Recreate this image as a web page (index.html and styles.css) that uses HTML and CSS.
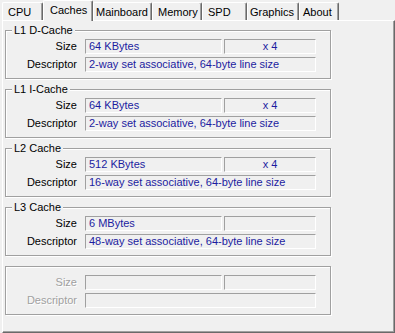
FILE: index.html
```html
<!DOCTYPE html>
<html lang="en">
<head>
    <meta charset="UTF-8">
    <title>CPU-Z Caches</title>
    <link rel="stylesheet" href="styles.css">
</head>
<body>
    <div class="tabs">
        <div class="tab tab-cpu">CPU</div>
        <div class="tab tab-caches active">Caches</div>
        <div class="tab tab-mainboard">Mainboard</div>
        <div class="tab tab-memory">Memory</div>
        <div class="tab tab-spd">SPD</div>
        <div class="tab tab-graphics">Graphics</div>
        <div class="tab tab-about">About</div>
    </div>

    <div class="panel">
        <!-- L1 data -->
        <div class="group">
            <span class="legend">L1 D-Cache</span>
            <div class="row">
                <span class="label">Size</span>
                <span class="field size">64 KBytes</span>
                <span class="field count">x 4</span>
            </div>
            <div class="row">
                <span class="label">Descriptor</span>
                <span class="field desc">2-way set associative, 64-byte line size</span>
            </div>
        </div>

        <!-- L1 instruction -->
        <div class="group">
            <span class="legend">L1 I-Cache</span>
            <div class="row">
                <span class="label">Size</span>
                <span class="field size">64 KBytes</span>
                <span class="field count">x 4</span>
            </div>
            <div class="row">
                <span class="label">Descriptor</span>
                <span class="field desc">2-way set associative, 64-byte line size</span>
            </div>
        </div>

        <!-- L2 -->
        <div class="group">
            <span class="legend">L2 Cache</span>
            <div class="row">
                <span class="label">Size</span>
                <span class="field size">512 KBytes</span>
                <span class="field count">x 4</span>
            </div>
            <div class="row">
                <span class="label">Descriptor</span>
                <span class="field desc">16-way set associative, 64-byte line size</span>
            </div>
        </div>

        <!-- L3 -->
        <div class="group">
            <span class="legend">L3 Cache</span>
            <div class="row">
                <span class="label">Size</span>
                <span class="field size">6 MBytes</span>
                <span class="field count"></span>
            </div>
            <div class="row">
                <span class="label">Descriptor</span>
                <span class="field desc">48-way set associative, 64-byte line size</span>
            </div>
        </div>

        <!-- empty slot -->
        <div class="group disabled">
            <div class="row">
                <span class="label">Size</span>
                <span class="field size"></span>
                <span class="field count"></span>
            </div>
            <div class="row">
                <span class="label">Descriptor</span>
                <span class="field desc"></span>
            </div>
        </div>
    </div>
</body>
</html>
```

FILE: styles.css
```css
/* window base */
body {
    margin: 0;
    padding: 0;
    background-color: #f0f0f0;
    color: #000;
    font-family: "Liberation Sans", Arial, sans-serif;
    font-size: 11px;
    line-height: 13px;
}

/* tab strip */
.tabs {
    display: flex;
    align-items: flex-end;
    height: 20px;
    padding-left: 2px;
}

.tab {
    box-sizing: border-box;
    height: 18px;
    padding: 3px 0 0 5px;
    border-top: 1px solid #fff;
    border-left: 1px solid #fff;
    border-right: 1px solid #696969;
    border-radius: 2px 2px 0 0;
    box-shadow: inset -1px 0 0 #a0a0a0;
    white-space: nowrap;
}

.tab.active {
    height: 21px;
    margin-bottom: -1px;
    padding: 3px 0 0 6px;
    position: relative;
    z-index: 1;
    background-color: #f0f0f0;
}

.tab-cpu { width: 41px; }
.tab-caches { width: 50px; }
.tab-mainboard { width: 59px; padding-left: 2px; }
.tab-memory { width: 50px; }
.tab-spd { width: 45px; }
.tab-graphics { width: 52px; padding-left: 2px; }
.tab-about { width: 40px; padding-left: 3px; }

/* page panel */
.panel {
    box-sizing: border-box;
    width: 393px;
    height: 313px;
    margin-left: 2px;
    padding: 9px 0 0 2px;
    border-top: 1px solid #fff;
    border-left: 1px solid #fff;
    border-right: 1px solid #696969;
    border-bottom: 1px solid #696969;
    box-shadow: inset -1px -1px 0 #a0a0a0;
    display: flex;
    flex-direction: column;
    gap: 10px;
}

/* etched group box */
.group {
    box-sizing: border-box;
    position: relative;
    width: 326px;
    height: 49px;
    padding: 8px 14px 5px 0;
    border: 1px solid #a0a0a0;
    box-shadow: 1px 1px 0 #fff, inset 1px 1px 0 #fff;
    display: flex;
    flex-direction: column;
    gap: 3px;
}

.legend {
    position: absolute;
    top: -7px;
    left: 6px;
    padding: 0 2px;
    background-color: #f0f0f0;
}

.row {
    display: flex;
    align-items: center;
}

.label {
    width: 71px;
    margin-right: 8px;
    text-align: right;
}

/* sunken read-only fields */
.field {
    box-sizing: border-box;
    height: 15px;
    padding: 0 3px;
    border-top: 1px solid #a0a0a0;
    border-left: 1px solid #a0a0a0;
    border-right: 1px solid #fff;
    border-bottom: 1px solid #fff;
    color: #1c1ca0;
    white-space: nowrap;
    overflow: hidden;
}

.field.size { width: 137px; }

.field.count {
    width: 92px;
    margin-left: 2px;
    text-align: center;
}

.field.desc { width: 231px; }

.disabled .label {
    color: #a0a0a0;
    text-shadow: 1px 1px 0 #fff;
}
```
